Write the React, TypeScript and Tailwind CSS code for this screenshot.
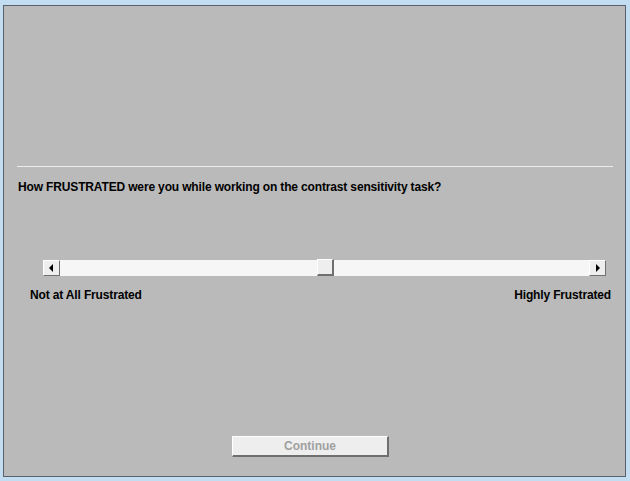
import React from "react";

const font = { fontFamily: '"Liberation Sans", Arial, sans-serif' };

function ArrowBtn({ dir }: { dir: "left" | "right" }) {
  return (
    <div className="w-[17px] h-[16px] shrink-0 bg-[#eeeeee] border-t border-l border-t-white border-l-white border-b border-r border-b-[#6f6f6f] border-r-[#6f6f6f] flex items-center justify-center">
      <svg width="5" height="8" viewBox="0 0 5 8">
        {dir === "left" ? (
          <polygon points="4,0 4,8 0,4" fill="#000" />
        ) : (
          <polygon points="1,0 1,8 5,4" fill="#000" />
        )}
      </svg>
    </div>
  );
}

export default function App() {
  return (
    <div
      className="w-[630px] h-[481px] bg-[#c2dcf2] pl-[3px] pt-[5px] pr-[4px] pb-[4px]"
      style={font}
    >
      <div className="w-full h-full border border-[#59626c] bg-[#bababa] flex flex-col">
        <div className="mt-[160px] ml-[13px] w-[596px] h-px bg-[#ececec]" />
        <div className="mt-[13px] ml-[14px] text-[12px] leading-[14px] font-bold text-black tracking-[-0.15px]">
          How FRUSTRATED were you while working on the contrast sensitivity task?
        </div>
        <div className="mt-[66px] ml-[39px] w-[563px] h-[16px] flex items-stretch">
          <ArrowBtn dir="left" />
          <div className="flex-1 bg-[#f6f6f6] flex items-center justify-center">
            <div className="w-[17px] h-[17px] -mt-[1px] ml-[2px] bg-[#eeeeee] border-t border-l border-t-white border-l-white border-b-2 border-r-2 border-b-[#6f6f6f] border-r-[#6f6f6f]" />
          </div>
          <ArrowBtn dir="right" />
        </div>
        <div className="mt-[12px] pl-[26px] pr-[14px] flex justify-between text-[12px] leading-[14px] font-bold text-black tracking-[-0.15px]">
          <span>Not at All Frustrated</span>
          <span>Highly Frustrated</span>
        </div>
        <div className="mt-[134px] ml-[228px] w-[157px] h-[21px] bg-[#eeeeee] border-t border-l border-t-white border-l-white border-b-2 border-r-2 border-b-[#6f6f6f] border-r-[#6f6f6f] flex items-center justify-center text-[12px] font-bold text-[#a0a0a0]">
          Continue
        </div>
      </div>
    </div>
  );
}
